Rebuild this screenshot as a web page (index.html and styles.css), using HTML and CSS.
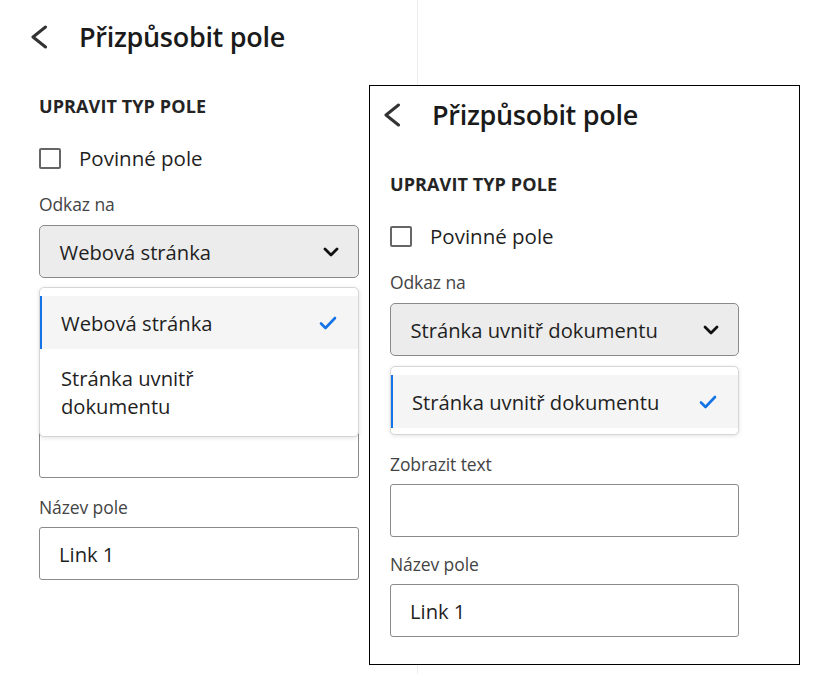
FILE: index.html
```html
<!DOCTYPE html>
<html lang="cs">
<head>
<meta charset="utf-8">
<title>Přizpůsobit pole</title>
<link rel="stylesheet" href="styles.css">
</head>
<body>
<div class="canvas">
  <section class="panel panel-left">
    <header class="head">
      <svg class="back" viewBox="0 0 18 24" width="18" height="24"><path d="M15.5 2 L3 12 L15.5 22" fill="none" stroke="#333" stroke-width="3" stroke-linecap="round" stroke-linejoin="round"/></svg>
      <h1 class="title">Přizpůsobit pole</h1>
    </header>
    <h2 class="section">UPRAVIT TYP POLE</h2>
    <div class="check"><span class="box"></span><span>Povinné pole</span></div>
    <div class="label">Odkaz na</div>
    <div class="picker-wrap">
      <div class="picker"><span>Webová stránka</span>
        <svg class="chev" viewBox="0 0 16 10" width="16" height="10"><path d="M2 2 L8 8 L14 2" fill="none" stroke="#111" stroke-width="2.8" stroke-linecap="round" stroke-linejoin="round"/></svg>
      </div>
      <ul class="menu menu-float">
        <li class="item selected"><span>Webová stránka</span>
          <svg class="tick" viewBox="0 0 18 14" width="18" height="14"><path d="M2 7.5 L6.5 12 L16 2" fill="none" stroke="#1473e6" stroke-width="2.6" stroke-linecap="round" stroke-linejoin="round"/></svg>
        </li>
        <li class="item"><span>Stránka uvnitř dokumentu</span></li>
      </ul>
    </div>
    <div class="input input-covered"></div>
    <div class="label label-gap">Název pole</div>
    <div class="input"><span>Link 1</span></div>
  </section>

  <section class="panel panel-right">
    <header class="head">
      <svg class="back" viewBox="0 0 18 24" width="18" height="24"><path d="M15.5 2 L3 12 L15.5 22" fill="none" stroke="#333" stroke-width="3" stroke-linecap="round" stroke-linejoin="round"/></svg>
      <h1 class="title">Přizpůsobit pole</h1>
    </header>
    <h2 class="section">UPRAVIT TYP POLE</h2>
    <div class="check"><span class="box"></span><span>Povinné pole</span></div>
    <div class="label">Odkaz na</div>
    <div class="picker-wrap">
      <div class="picker"><span>Stránka uvnitř dokumentu</span>
        <svg class="chev" viewBox="0 0 16 10" width="16" height="10"><path d="M2 2 L8 8 L14 2" fill="none" stroke="#111" stroke-width="2.8" stroke-linecap="round" stroke-linejoin="round"/></svg>
      </div>
      <ul class="menu">
        <li class="item selected"><span>Stránka uvnitř dokumentu</span>
          <svg class="tick" viewBox="0 0 18 14" width="18" height="14"><path d="M2 7.5 L6.5 12 L16 2" fill="none" stroke="#1473e6" stroke-width="2.6" stroke-linecap="round" stroke-linejoin="round"/></svg>
        </li>
      </ul>
    </div>
    <div class="label label-after-menu">Zobrazit text</div>
    <div class="input"></div>
    <div class="label label-gap label-tight">Název pole</div>
    <div class="input"><span>Link 1</span></div>
  </section>
</div>
</body>
</html>
```

FILE: styles.css
```css
* { box-sizing: border-box; }
html, body { margin: 0; padding: 0; background: #fff; }
body {
  width: 816px;
  height: 674px;
  overflow: hidden;
  font-family: "Open Sans", "Noto Sans", sans-serif;
  color: #222;
}
.canvas { position: relative; width: 816px; height: 674px; }

.panel { display: flex; flex-direction: column; background: #fff; }
.panel-left {
  width: 418px;
  height: 674px;
  padding: 19px 0 0 39px;
  border-right: 1px solid #ededed;
}
.panel-right {
  position: absolute;
  left: 369px;
  top: 85px;
  width: 431px;
  height: 580px;
  border: 1px solid #000;
  padding: 11px 0 0 20px;
}
.panel-left .picker, .panel-left .menu, .panel-left .input { width: 320px; }
.panel-right .picker, .panel-right .menu, .panel-right .input { width: 349px; }

.head { display: flex; align-items: center; height: 36px; margin-left: -9px; }
.panel-right .head { margin-left: -7px; }
.back { display: block; margin-right: 31px; }
.title { margin: 0; font-size: 27px; font-weight: 600; line-height: 36px; color: #1a1a1a; letter-spacing: -0.3px; }

.section { margin: 41px 0 0; font-size: 18px; font-weight: 700; line-height: 20px; letter-spacing: 0.1px; color: #242424; }

.check { display: flex; align-items: center; margin-top: 31px; height: 22px; font-size: 20.5px; color: #1f1f1f; }
.box { width: 22px; height: 21px; border: 2px solid #666; border-radius: 2px; margin-right: 18px; }

.label { font-size: 17.5px; line-height: 22px; color: #444; margin-top: 24px; letter-spacing: -0.1px; }

.picker-wrap { position: relative; margin-top: 10px; }
.picker {
  display: flex; align-items: center; justify-content: space-between;
  height: 53px; padding: 0 19px 0 19.5px;
  background: #ececec; border: 1.5px solid #8a8a8a; border-radius: 5px;
  font-size: 20.2px; color: #1f1f1f;
}
.chev { display: block; }

.menu {
  list-style: none; margin: 9px 0 0; padding: 8px 0 6px;
  background: #fff; border: 1px solid #d6d6d6; border-radius: 5px;
  box-shadow: 0 1px 4px rgba(0,0,0,0.12);
}
.panel-right .menu { margin-top: 10px; }
.menu-float { position: absolute; top: 100%; left: 0; z-index: 2; }
.item {
  display: flex; align-items: center; justify-content: space-between;
  min-height: 53px; padding: 0 21px 0 19px;
  font-size: 20.2px; line-height: 28px; color: #1f1f1f;
  border-left: 2px solid transparent;
}
.item span { max-width: 242px; }
.panel-right .item span { max-width: 270px; }
.item.selected { background: #f5f5f5; border-left-color: #1473e6; }
.item:not(.selected) { padding-top: 15px; padding-bottom: 10px; }
.tick { display: block; flex: none; }

.label-after-menu { margin-top: 18px; }
.label-gap { margin-top: 18px; }
.label-tight { margin-top: 16px; }
.input {
  margin-top: 9px; height: 53px; display: flex; align-items: center;
  padding: 0 19px; border: 1.5px solid #8a8a8a; border-radius: 3px;
  font-size: 20.2px; color: #1f1f1f;
}
.input-covered { margin-top: 147px; }
```
